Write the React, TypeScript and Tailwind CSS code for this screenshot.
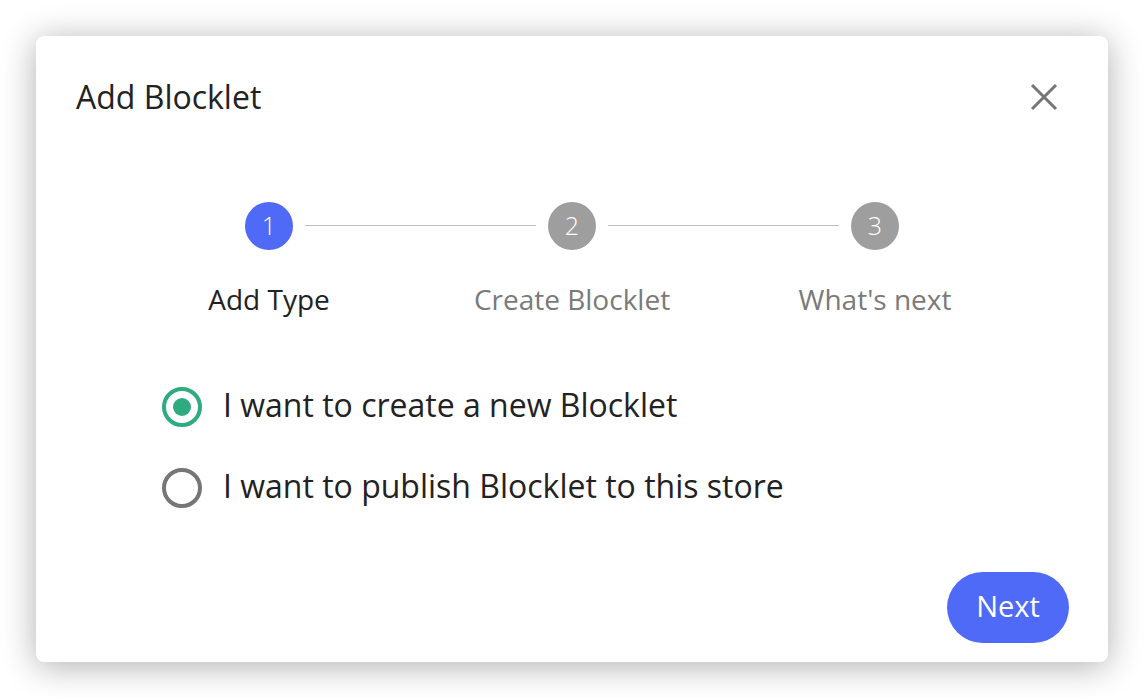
import { useState } from 'react';

const steps = ['Add Type', 'Create Blocklet', "What's next"];

const options = [
  'I want to create a new Blocklet',
  'I want to publish Blocklet to this store',
];

const StepIcon = ({ n, active }: { n: number; active: boolean }) => (
  <div
    className={`w-[48px] h-[48px] rounded-full flex items-center justify-center text-white text-[25px] font-light ${
      active ? 'bg-[#4e6af6]' : 'bg-[#9e9e9e]'
    }`}
  >
    {n}
  </div>
);

const Radio = ({ checked }: { checked: boolean }) => (
  <div
    className={`w-[40px] h-[40px] rounded-full border-[4px] flex items-center justify-center ${
      checked ? 'border-[#2fab80]' : 'border-[#767676]'
    }`}
  >
    {checked && <div className="w-[18px] h-[18px] rounded-full bg-[#2fab80]" />}
  </div>
);

export default function App() {
  const [selected, setSelected] = useState(0);

  return (
    <div className="w-[1144px] h-[698px] bg-white p-[36px] font-['Open_Sans',sans-serif]">
      <div className="w-[1072px] h-[626px] rounded-[8px] bg-white shadow-[0_4px_34px_rgba(0,0,0,0.32)] flex flex-col">
        {/* Header */}
        <div className="flex items-center justify-between pl-[40px] pr-[50px] pt-[44px] h-[78px]">
          <h1 className="text-[32px] leading-[34px] text-[#222]">Add Blocklet</h1>
          <svg width="28" height="28" viewBox="0 0 28 28" className="text-[#757575]">
            <path d="M2 2 26 26M26 2 2 26" stroke="currentColor" strokeWidth="3" />
          </svg>
        </div>

        {/* Stepper */}
        <div className="mt-[88px] mx-auto grid grid-cols-3 w-[909px]">
          {steps.map((label, i) => (
            <div key={label} className="relative flex flex-col items-center">
              {i > 0 && (
                <div className="absolute top-[23px] left-[calc(-50%+36px)] right-[calc(50%+36px)] h-px bg-[#bdbdbd]" />
              )}
              <StepIcon n={i + 1} active={i === 0} />
              <div
                className={`mt-[32px] text-[28px] leading-[34px] ${
                  i === 0 ? 'text-[#222]' : 'text-[#7a7a7a]'
                }`}
              >
                {label}
              </div>
            </div>
          ))}
        </div>

        {/* Options */}
        <div className="mt-[71px] pl-[126px] flex flex-col gap-[41px]">
          {options.map((label, i) => (
            <label
              key={label}
              className="flex items-center gap-[21px] h-[40px] cursor-pointer"
              onClick={() => setSelected(i)}
            >
              <Radio checked={selected === i} />
              <span className="text-[32px] leading-[40px] pb-[4px] text-[#222]">{label}</span>
            </label>
          ))}
        </div>

        {/* Footer */}
        <div className="mt-auto flex justify-end pr-[39px] pb-[19px]">
          <button className="w-[122px] h-[71px] pb-[3px] rounded-full bg-[#4e6af6] text-white text-[29px]">
            Next
          </button>
        </div>
      </div>
    </div>
  );
}
